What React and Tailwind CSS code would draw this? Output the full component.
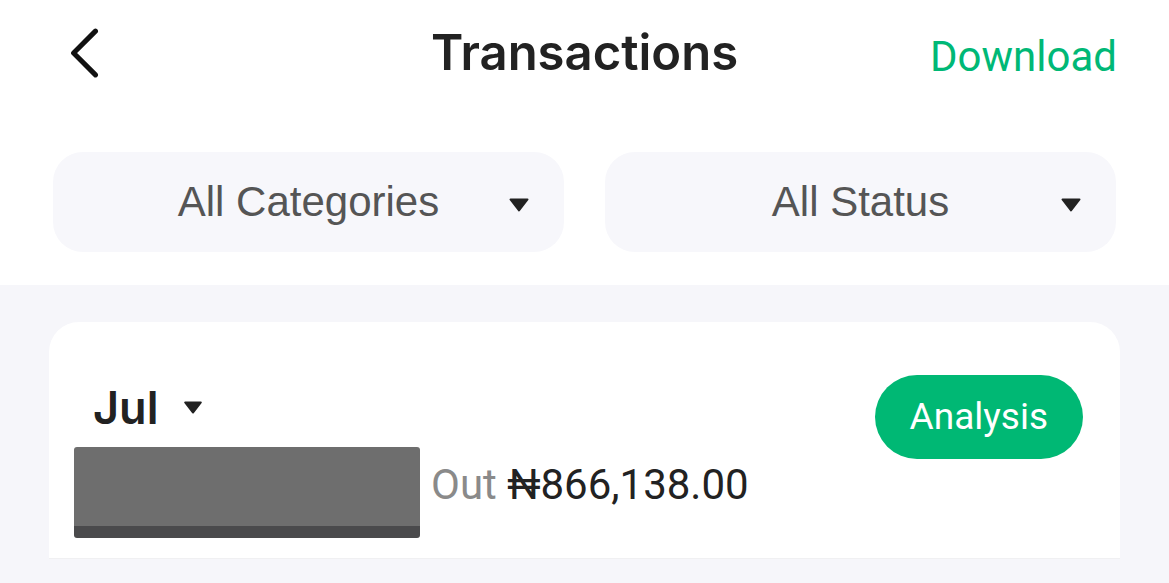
import React from 'react';

const Caret = ({ className }) => (
    <svg viewBox="0 0 20 14" className={className}>
        <path d="M1.5 1.5 H18.5 L10 12.5 Z" fill="#222" stroke="#222" strokeWidth="2" strokeLinejoin="round" />
    </svg>
);

const FilterPill = ({ label }) => (
    <div className="relative flex-1 h-[100px] rounded-[30px] bg-[#f7f7fb] flex items-center justify-center">
        <span className="text-[42px] text-[#555] leading-none" style={{ fontFamily: '"Liberation Sans", Arial, sans-serif' }}>{label}</span>
        <Caret className="absolute right-[35px] top-[46px] w-[20px] h-[14px]" />
    </div>
);

export default function App() {
    return (
        <div className="w-full h-[583px] overflow-hidden bg-[#f6f6fa]" style={{ fontFamily: 'Roboto, "Noto Sans", sans-serif' }}>
            {/* Header */}
            <div className="bg-white h-[285px]">
                <div className="relative h-[105px] flex items-center justify-center">
                    <svg viewBox="0 0 32 48" className="absolute left-[66px] top-[28px] w-[36px] h-[50px]" fill="none">
                        <path d="M27 3 L6 24 L27 45" stroke="#111" strokeWidth="4.8" strokeLinecap="round" strokeLinejoin="round" />
                    </svg>
                    <h1 className="text-[49px] font-semibold text-[#222] tracking-[0px] mt-[1px]" style={{ fontFamily: 'Inter, sans-serif' }}>Transactions</h1>
                    <span className="absolute right-[52px] top-[25px] text-[42px] text-[#00b876]">Download</span>
                </div>
                <div className="flex gap-[41px] px-[53px] pt-[47px]">
                    <FilterPill label="All Categories" />
                    <FilterPill label="All Status" />
                </div>
            </div>

            {/* Month card */}
            <div className="mx-[49px] mt-[37px] bg-white rounded-t-[30px]">
                <div className="flex justify-between pl-[44px] pr-[37px] pt-[53px] pb-[20px] border-b border-[#f0f0f2]">
                    <div className="flex flex-col">
                        <div className="flex items-center gap-[25px] h-[72px] -mt-[4px]">
                            <span className="text-[45px] font-semibold text-[#222] leading-none" style={{ fontFamily: 'Inter, sans-serif' }}>Jul</span>
                            <Caret className="w-[20px] h-[13px]" />
                        </div>
                        <div className="flex items-start -ml-[19px] mt-[4px]">
                            <div className="w-[346px] h-[91px] bg-[#6e6e6e] rounded-[3px] border-b-[12px] border-[#4a4a4c]" />
                            <div className="ml-[11px] mt-[17px] text-[42px] leading-none">
                                <span className="text-[#8a8a8a]">Out </span>
                                <span className="text-[#222]">₦866,138.00</span>
                            </div>
                        </div>
                    </div>
                    <button className="h-[84px] px-[35px] rounded-full bg-[#00b874] text-white text-[37px]">Analysis</button>
                </div>
            </div>
        </div>
    );
}
